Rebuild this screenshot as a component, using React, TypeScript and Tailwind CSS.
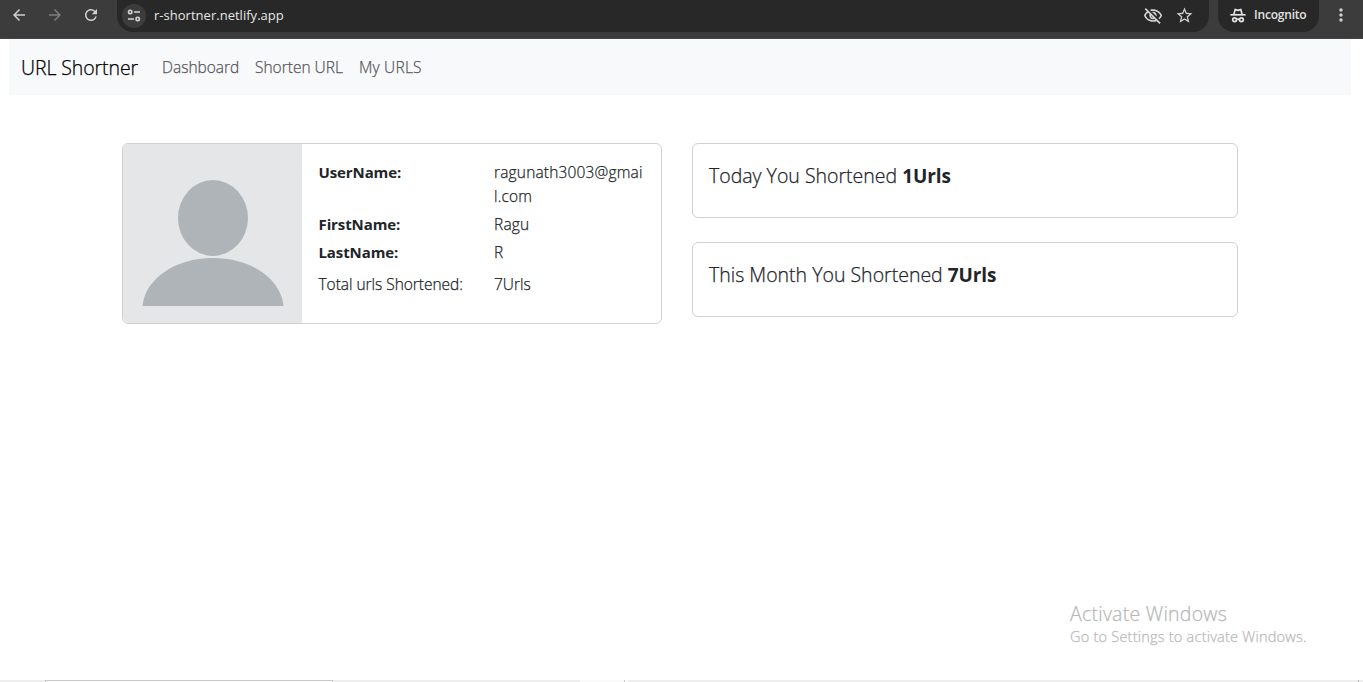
import { MdArrowBack, MdArrowForward, MdMoreVert, MdOutlineVisibilityOff, MdRefresh, MdStarBorder } from "react-icons/md";

function TuneIcon() {
  return (
    <svg width="14" height="14" viewBox="0 0 14 14" fill="none" stroke="#d5d5d5" strokeWidth="1.6">
      <circle cx="3.2" cy="3" r="1.7" />
      <path d="M7 3h6M1 10h6" />
      <circle cx="10.7" cy="10" r="1.7" />
    </svg>
  );
}

function IncognitoIcon() {
  return (
    <svg width="16" height="16" viewBox="0 0 16 16" fill="none" stroke="#e3e3e3" strokeWidth="1.7">
      <path d="M0.4 6.8h15.2" />
      <path d="M3.9 6.4L5.2 1.6l2.8.8 2.8-.8 1.3 4.8" />
      <circle cx="4.6" cy="11.8" r="1.9" />
      <circle cx="11.4" cy="11.8" r="1.9" />
      <path d="M6.5 11.5q1.5-.8 3 0" />
    </svg>
  );
}

function BrowserBar() {
  return (
    <header className="flex h-[39px] items-start border-b border-[#474448] bg-[#3c3c3c] text-[#d0d0d0]">
      <div className="flex h-8 w-[117px] shrink-0 items-start pt-[7px]">
        <MdArrowBack className="-mt-px ml-[10px] size-[18px]" />
        <MdArrowForward className="-mt-px ml-[18px] size-[18px] text-[#7d7d7d]" />
        <MdRefresh className="-mt-px ml-[18px] size-[18px]" />
      </div>
      <div className="flex h-8 w-[1092px] shrink-0 items-center rounded-b-2xl bg-[#282828] pb-px">
        <div className="ml-[5px] flex size-6 items-center justify-center rounded-full bg-[#3c3c3c]">
          <TuneIcon />
        </div>
        <span className="ml-2 flex-1 font-['Open_Sans',sans-serif] text-[13px] tracking-[0.02px] text-[#e6e6e6]">
          r-shortner.netlify.app
        </span>
        <MdOutlineVisibilityOff className="size-5" />
        <MdStarBorder className="-mt-px mr-[15px] ml-3 size-[19px]" />
      </div>
      <div className="ml-[9px] flex h-8 w-[101px] shrink-0 items-center gap-2 rounded-b-2xl bg-[#282828] pb-px pl-3">
        <IncognitoIcon />
        <span className="-mt-px font-['Open_Sans',sans-serif] text-[12px] font-semibold tracking-[-0.2px] text-[#e3e3e3]">
          Incognito
        </span>
      </div>
      <MdMoreVert className="mt-[5px] ml-3 size-5" />
    </header>
  );
}

function Avatar() {
  return (
    <svg width="179" height="179" viewBox="0 0 179 179" className="shrink-0 bg-[#e4e6e8]" fill="#aeb4b8">
      <ellipse cx="90" cy="74" rx="35" ry="38" />
      <path d="M19.5 162C22 135 52 114 90 114s68 21 70.5 48z" />
    </svg>
  );
}

function FieldName({ children }: { children: string }) {
  return <b className="text-[15px] font-bold tracking-[-0.1px] [-webkit-text-stroke:0]">{children}</b>;
}

function ProfileCard() {
  return (
    <section className="flex h-[181px] w-[540px] overflow-hidden rounded-md border border-[#d0d0d0]">
      <Avatar />
      <div className="grid flex-1 grid-cols-[175.5px_152px] content-start gap-y-1 pt-4 pl-[16.5px] text-[15.5px] leading-6 font-light [-webkit-text-stroke:0.25px]">
        <FieldName>UserName:</FieldName>
        <span className="tracking-[0.17px] break-all">ragunath3003@gmail.com</span>
        <FieldName>FirstName:</FieldName>
        <span className="tracking-[0.17px]">Ragu</span>
        <FieldName>LastName:</FieldName>
        <span>R</span>
        <span className="mt-1 tracking-[-0.03px] whitespace-nowrap">Total urls Shortened:</span>
        <span className="mt-1">7Urls</span>
      </div>
    </section>
  );
}

function StatCard({ label, count }: { label: string; count: string }) {
  return (
    <section className="h-[75px] w-[546px] rounded-md border border-[#d0d0d0] px-4 pt-[20px] text-[19.5px] leading-6 font-light [-webkit-text-stroke:0.25px]">
      {label} <b className="text-[19px] font-bold tracking-[-0.1px] [-webkit-text-stroke:0]">{count}</b>
    </section>
  );
}

export default function App() {
  return (
    <div className="flex h-[682px] w-[1363px] flex-col overflow-hidden bg-white font-['Open_Sans',sans-serif] text-[#212529]">
      <BrowserBar />
      <nav className="mr-3 ml-[9px] flex h-14 shrink-0 items-center bg-[#f8f9fb] pl-3 font-light [-webkit-text-stroke:0.25px]">
        <span className="w-[141px] pt-px text-[19.5px] tracking-[-0.1px] whitespace-nowrap text-black">URL Shortner</span>
        <div className="flex pt-[2px] text-[15.5px] text-[#56575a]">
          <a className="w-[93px]">Dashboard</a>
          <a className="w-[104px]">Shorten URL</a>
          <a className="tracking-[0.2px]">My URLS</a>
        </div>
      </nav>
      <main className="flex flex-1 items-start gap-[30px] pt-12 pl-[122px]">
        <ProfileCard />
        <div className="flex flex-col gap-6">
          <StatCard label="Today You Shortened" count="1Urls" />
          <StatCard label="This Month You Shortened" count="7Urls" />
        </div>
      </main>
      <aside className="mb-8 ml-[1070px] font-light text-[#b8b8b8] [-webkit-text-stroke:0.25px]">
        <p className="text-[19.5px] leading-[24px] tracking-[0.25px]">Activate Windows</p>
        <p className="text-[14.5px] leading-[22px] tracking-[0.23px]">Go to Settings to activate Windows.</p>
      </aside>
      <footer className="flex h-[2px] shrink-0 bg-[#eeeeee]">
        <div className="ml-[45px] w-[288px] border-x border-t border-[#c8c8c8] bg-white" />
        <div className="ml-[247px] flex w-12 bg-[#fafafa]">
          <div className="ml-11 w-px bg-[#c8c8c8]" />
        </div>
        <div className="ml-[730px] w-px bg-[#b8b8b8]" />
      </footer>
    </div>
  );
}
